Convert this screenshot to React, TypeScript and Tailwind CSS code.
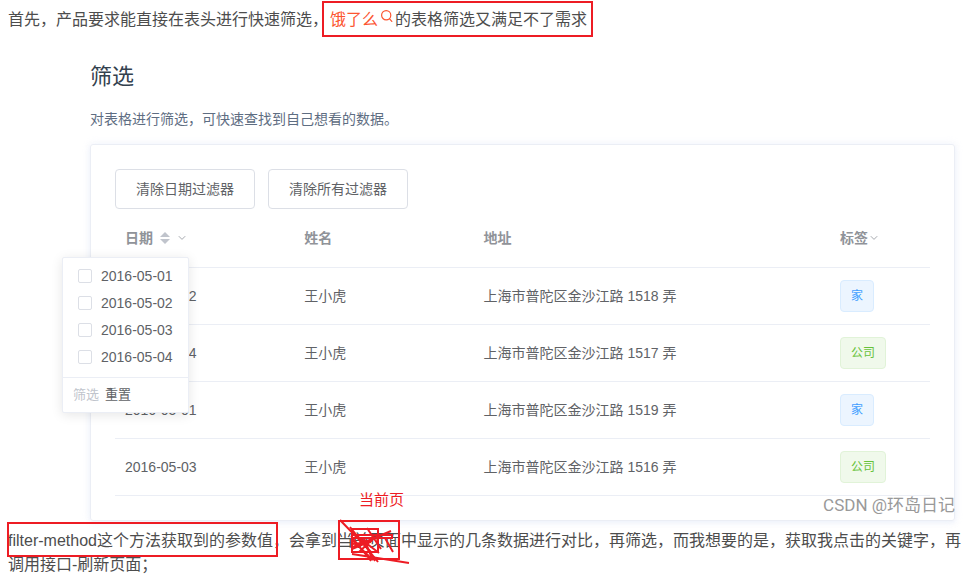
import { useState } from 'react';

interface Row {
  date: string;
  name: string;
  address: string;
  tag: '家' | '公司';
}

const rows: Row[] = [
  { date: '2016-05-02', name: '王小虎', address: '上海市普陀区金沙江路 1518 弄', tag: '家' },
  { date: '2016-05-04', name: '王小虎', address: '上海市普陀区金沙江路 1517 弄', tag: '公司' },
  { date: '2016-05-01', name: '王小虎', address: '上海市普陀区金沙江路 1519 弄', tag: '家' },
  { date: '2016-05-03', name: '王小虎', address: '上海市普陀区金沙江路 1516 弄', tag: '公司' },
];

const dateFilters = ['2016-05-01', '2016-05-02', '2016-05-03', '2016-05-04'];

const tagStyles = {
  家: 'bg-[#ecf5ff] border-[#d9ecff] text-[#409eff]',
  公司: 'bg-[#f0f9eb] border-[#e1f3d8] text-[#67c23a]',
};

function SearchIcon() {
  return (
    <svg viewBox="0 0 12 12" className="inline-block w-3 h-3 ml-[3px] mr-0.5 mb-[3px] align-baseline" fill="none" stroke="#fc5531" strokeWidth="1.2">
      <circle cx="5.2" cy="5.2" r="4.6" />
      <path d="M8.4 8.6 L11.2 11.8" />
    </svg>
  );
}

function Chevron() {
  return (
    <svg viewBox="0 0 8 6" className="w-2 h-1.5" fill="none" stroke="#a5a8ae">
      <path d="M0.8 1.2 L4 4.4 L7.2 1.2" />
    </svg>
  );
}

function SortCarets() {
  return (
    <svg viewBox="0 0 10 12" className="w-2.5 h-3" fill="#c0c4cc">
      <path d="M0 5 L5 0 L10 5 Z" />
      <path d="M0 7 L5 12 L10 7 Z" />
    </svg>
  );
}

function Scribble() {
  return (
    <svg
      viewBox="0 0 74 46"
      className="absolute left-0 -top-[11px] w-[74px] h-[46px] max-w-none"
      fill="none"
      stroke="#ed1c24"
      strokeWidth="2"
    >
      <rect x="2" y="3" width="60" height="38" />
      <rect x="15" y="11" width="26" height="23" />
      <rect x="15" y="17" width="40" height="3" />
      <path d="M3 2 L34 34 M13 9 L41 44 M30 10 L44 31 M54 13 L16 29 M48 20 L56 34" />
      <path d="M15 36 L72 45 M15 22 L36 42 M14 18 L34 43 M24 20 L38 43 M15 31 L36 22" />
      <path d="M20 18 L42 35 M16 26 L34 24 M22 34 L38 19 M27 20 L34 38" />
    </svg>
  );
}

function FilterPanel() {
  const [selected, setSelected] = useState<string[]>([]);

  const toggle = (value: string) => {
    setSelected((prev) => (prev.includes(value) ? prev.filter((v) => v !== value) : [...prev, value]));
  };

  return (
    <div className="absolute -left-[53px] top-12 w-[127px] bg-white border border-[#ebeef5] rounded-xs shadow-[0_2px_12px_rgba(0,0,0,0.1)]">
      <div className="pt-1 pb-[7px] pl-[15px]">
        {dateFilters.map((date) => (
          <label key={date} className="flex items-center gap-[9px] h-[27px] text-sm text-[#606266]">
            <input
              type="checkbox"
              checked={selected.includes(date)}
              onChange={() => toggle(date)}
              className="appearance-none w-[14px] h-[14px] border border-[#dcdfe6] rounded-xs bg-white checked:bg-[#409eff]"
            />
            {date}
          </label>
        ))}
      </div>
      <div className="flex gap-[6px] h-[35px] items-center pl-[10px] border-t border-[#ebeef5] text-[13px]">
        <button type="button" disabled={selected.length === 0} className="text-[#606266] disabled:text-[#c0c4cc]">
          筛选
        </button>
        <button type="button" onClick={() => setSelected([])} className="text-[#606266]">
          重置
        </button>
      </div>
    </div>
  );
}

function TableDemo() {
  const buttonClass = 'h-10 px-5 border border-[#dcdfe6] rounded text-sm text-[#606266] bg-white';

  return (
    <section className="relative ml-[82px] mr-[14px]">
      <h3 className="pt-[29px] text-[22px] leading-8 text-[#33414e]">筛选</h3>
      <p className="mt-4 text-sm leading-5 text-[#5e6d82]">对表格进行筛选，可快速查找到自己想看的数据。</p>

      <div className="mt-[15px] p-6 border border-[#ebeef5] rounded-[3px] shadow-[0_0_8px_rgba(232,237,250,0.6),0_2px_4px_rgba(232,237,250,0.5)]">
        <div className="flex gap-[13px]">
          <button type="button" className={buttonClass}>清除日期过滤器</button>
          <button type="button" className={buttonClass}>清除所有过滤器</button>
        </div>

        <div className="relative">
          <table className="w-full table-fixed border-collapse text-sm text-left text-[#606266]">
            <thead>
              <tr className="h-[58px] border-b border-[#ebeef5] text-[#909399]">
                <th className="w-[22%] px-[10px]">
                  <div className="flex items-center">
                    日期
                    <button type="button" aria-label="排序" className="ml-[7px]"><SortCarets /></button>
                    <button type="button" aria-label="筛选日期" className="ml-2"><Chevron /></button>
                  </div>
                </th>
                <th className="w-[22%] px-[10px]">姓名</th>
                <th className="px-[10px]">地址</th>
                <th className="w-[100px] px-[10px]">
                  <div className="flex items-center gap-0.5">
                    标签
                    <button type="button" aria-label="筛选标签"><Chevron /></button>
                  </div>
                </th>
              </tr>
            </thead>
            <tbody>
              {rows.map((row) => (
                <tr key={row.date} className="h-[57px] border-b border-[#ebeef5]">
                  <td className="px-[10px]">{row.date}</td>
                  <td className="px-[10px]">{row.name}</td>
                  <td className="px-[10px]">{row.address}</td>
                  <td className="px-[10px]">
                    <span className={`inline-flex items-center h-8 px-[10px] border rounded text-xs align-middle ${tagStyles[row.tag]}`}>
                      {row.tag}
                    </span>
                  </td>
                </tr>
              ))}
            </tbody>
          </table>
          <FilterPanel />
        </div>
      </div>

      {/* Watermark */}
      <span className="absolute right-0 bottom-1 font-['Roboto','Noto_Sans_CJK_SC',sans-serif] text-[17px] leading-6 text-[#999999]">
        CSDN @环岛日记
      </span>
    </section>
  );
}

export default function App() {
  return (
    <main className="px-2 pt-2 bg-white font-['Liberation_Sans','Noto_Sans_CJK_SC',sans-serif] text-[#4d4d4d]">
      <p className="text-base leading-6">
        首先，产品要求能直接在表头进行快速筛选，
        <span className="relative inline-block ml-0.5">
          <a href="#eleme" className="text-[#fc5531]">
            饿了么
            <SearchIcon />
          </a>
          的表格筛选又满足不了需求
          <span className="absolute -left-2 -right-[6px] -top-[7px] -bottom-[5px] border-2 border-[#ed1c24]" />
        </span>
      </p>

      <TableDemo />

      <p className="mt-2 text-base leading-6">
        <span className="relative inline-block">
          filter-method这个方法获取到的参数值
          <span className="absolute -left-px -right-[5px] -top-[7px] -bottom-1 border-2 border-[#ed1c24]" />
        </span>
        ，会拿到
        <span className="relative inline-block">
          当前页面
          <span className="absolute left-[22px] -top-[41px] text-[15px] leading-6 text-[#ed1c24] whitespace-nowrap">当前页</span>
          <Scribble />
        </span>
        中显示的几条数据进行对比，再筛选，而我想要的是，获取我点击的关键字，再调用接口-刷新页面；
      </p>
    </main>
  );
}
